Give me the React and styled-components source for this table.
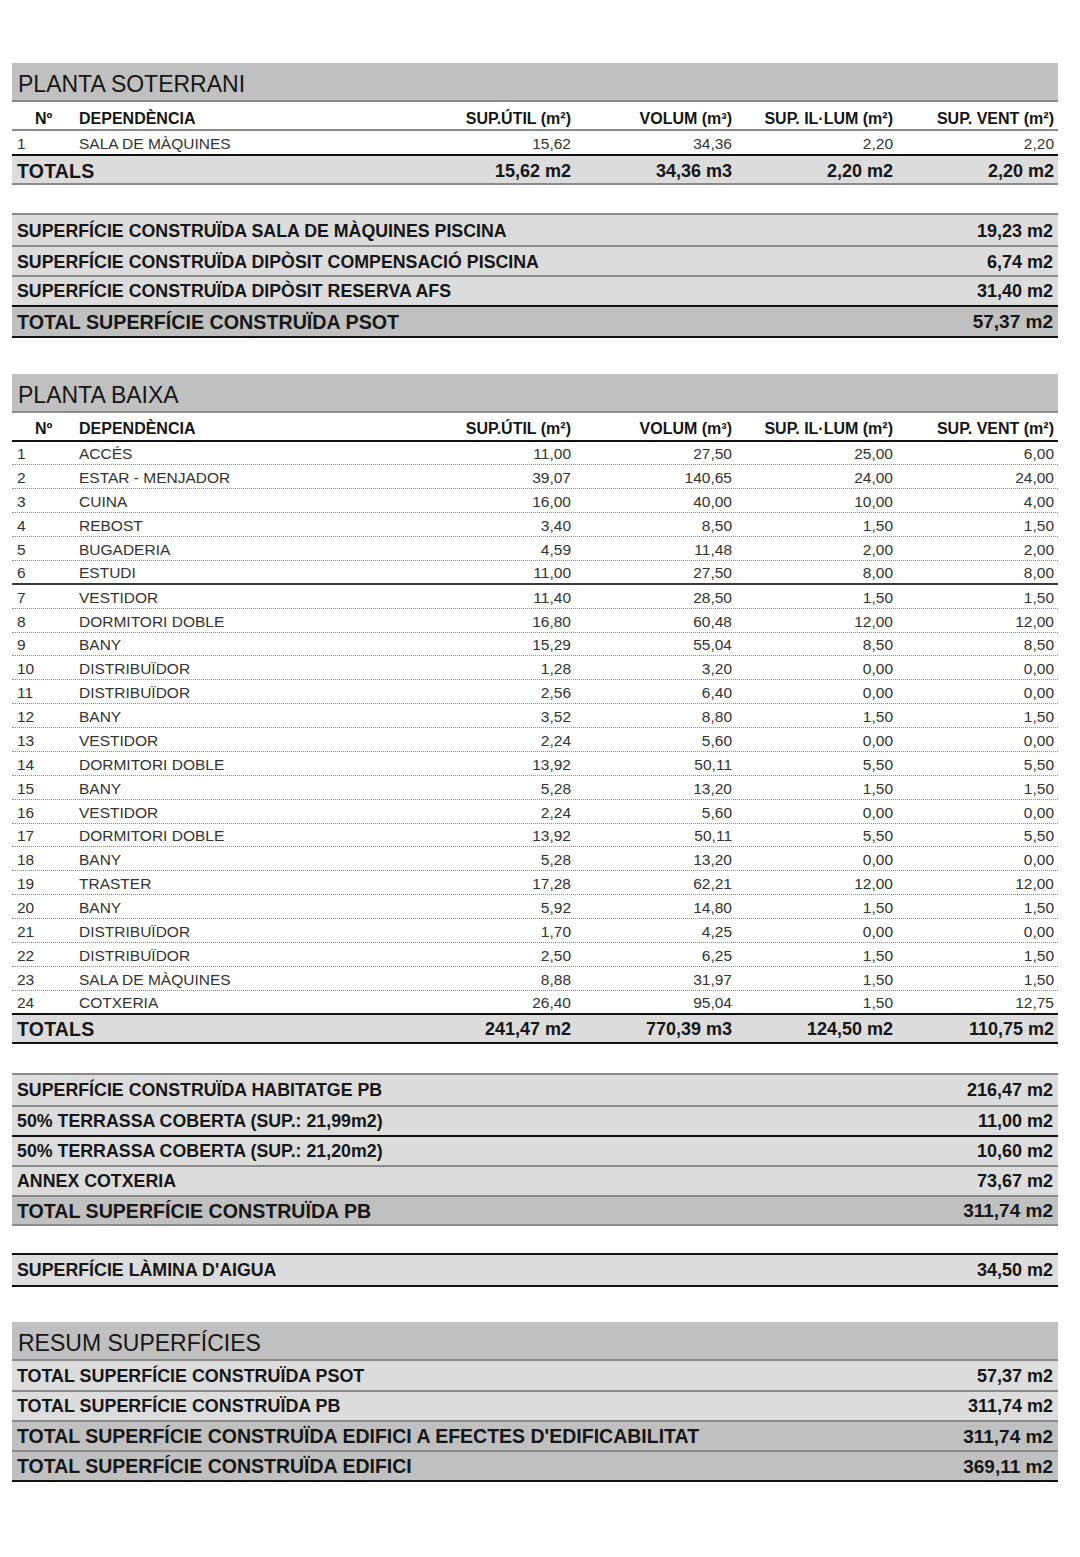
import React from 'react';
import styled, { createGlobalStyle } from 'styled-components';

const GlobalStyle = createGlobalStyle`
  html, body { margin: 0; padding: 0; background: #fff; }
  body { font-family: "Liberation Sans", Arial, sans-serif; color: #1a1a1a; }
`;

const Page = styled.div`
  width: 1046px;
  padding: 63px 0 60px 12px;
  display: flex;
  flex-direction: column;
`;

const Block = styled.section`
  margin-top: ${(p) => p.$gap || 0}px;
  display: flex;
  flex-direction: column;
`;

const TitleBand = styled.div`
  height: 39px;
  box-sizing: border-box;
  background: #c0c0c0;
  border-bottom: 2px solid #8a8a8a;
  padding: 6px 0 0 6px;
  display: flex;
  align-items: center;
  font-size: 23px;
  color: #161616;
`;

const lines = {
  dot: '1px dotted #8a8a8a',
  solid: '2px solid #3a3a3a',
  gray: '2px solid #8a8a8a',
  dark: '2px solid #111',
};

const Row = styled.div`
  display: grid;
  grid-template-columns: 67px 1fr 161px 161px 161px 161px;
  align-items: center;
  box-sizing: border-box;
  height: ${(p) => p.$h}px;
  background: ${(p) => p.$bg || '#fff'};
  border-bottom: ${(p) => lines[p.$line] || 'none'};
`;

const HeadCell = styled.div`
  font-weight: bold;
  font-size: 16px;
  color: #151515;
  padding-top: 6px;
  text-align: ${(p) => (p.$right ? 'right' : 'left')};
  padding-right: ${(p) => (p.$right ? 4 : 0)}px;
  padding-left: ${(p) => p.$pl || 0}px;
  white-space: nowrap;
`;

const Cell = styled.div`
  font-size: 15.5px;
  color: #333;
  padding-top: 3px;
  text-align: ${(p) => (p.$right ? 'right' : 'left')};
  padding-right: ${(p) => (p.$right ? 4 : 0)}px;
  padding-left: ${(p) => p.$pl || 0}px;
  white-space: nowrap;
`;

const TotalLabel = styled.div`
  grid-column: 1 / 3;
  font-weight: bold;
  font-size: 19.5px;
  padding: 3px 0 0 5px;
  letter-spacing: 0.2px;
  color: #161616;
`;

const TotalValue = styled.div`
  font-weight: bold;
  font-size: 18px;
  text-align: right;
  padding: 3px 4px 0 0;
  color: #161616;
  white-space: nowrap;
`;

const SumBox = styled.div`
  display: flex;
  flex-direction: column;
  border-top: ${(p) => lines[p.$top] || 'none'};
  border-bottom: ${(p) => lines[p.$bottom] || 'none'};
`;

const SumRow = styled.div`
  display: flex;
  justify-content: space-between;
  align-items: center;
  box-sizing: border-box;
  height: ${(p) => p.$h || 30}px;
  padding: 2px 5px 0 5px;
  background: ${(p) => (p.$dark ? '#c0c0c0' : '#dcdcdc')};
  border-top: ${(p) => lines[p.$line] || 'none'};
  font-weight: bold;
  color: #161616;
  white-space: nowrap;
`;

const SumLabel = styled.span`
  font-size: ${(p) => p.$size}px;
`;

const SumValue = styled.span`
  font-size: ${(p) => p.$size}px;
`;

const Header = ({ line }) => (
  <Row $h={29} $line={line}>
    <HeadCell $pl={23}>Nº</HeadCell>
    <HeadCell>DEPENDÈNCIA</HeadCell>
    <HeadCell $right>SUP.ÚTIL (m²)</HeadCell>
    <HeadCell $right>VOLUM (m³)</HeadCell>
    <HeadCell $right>SUP. IL·LUM (m²)</HeadCell>
    <HeadCell $right>SUP. VENT (m²)</HeadCell>
  </Row>
);

const DataRow = ({ r, h, line }) => (
  <Row $h={h} $line={line}>
    <Cell $pl={5}>{r[0]}</Cell>
    <Cell>{r[1]}</Cell>
    <Cell $right>{r[2]}</Cell>
    <Cell $right>{r[3]}</Cell>
    <Cell $right>{r[4]}</Cell>
    <Cell $right>{r[5]}</Cell>
  </Row>
);

const Totals = ({ values, line }) => (
  <Row $h={29} $bg="#dcdcdc" $line={line}>
    <TotalLabel>TOTALS</TotalLabel>
    {values.map((v, i) => (
      <TotalValue key={i}>{v}</TotalValue>
    ))}
  </Row>
);

const baixa = [
  ['1', 'ACCÉS', '11,00', '27,50', '25,00', '6,00'],
  ['2', 'ESTAR - MENJADOR', '39,07', '140,65', '24,00', '24,00'],
  ['3', 'CUINA', '16,00', '40,00', '10,00', '4,00'],
  ['4', 'REBOST', '3,40', '8,50', '1,50', '1,50'],
  ['5', 'BUGADERIA', '4,59', '11,48', '2,00', '2,00'],
  ['6', 'ESTUDI', '11,00', '27,50', '8,00', '8,00'],
  ['7', 'VESTIDOR', '11,40', '28,50', '1,50', '1,50'],
  ['8', 'DORMITORI DOBLE', '16,80', '60,48', '12,00', '12,00'],
  ['9', 'BANY', '15,29', '55,04', '8,50', '8,50'],
  ['10', 'DISTRIBUÏDOR', '1,28', '3,20', '0,00', '0,00'],
  ['11', 'DISTRIBUÏDOR', '2,56', '6,40', '0,00', '0,00'],
  ['12', 'BANY', '3,52', '8,80', '1,50', '1,50'],
  ['13', 'VESTIDOR', '2,24', '5,60', '0,00', '0,00'],
  ['14', 'DORMITORI DOBLE', '13,92', '50,11', '5,50', '5,50'],
  ['15', 'BANY', '5,28', '13,20', '1,50', '1,50'],
  ['16', 'VESTIDOR', '2,24', '5,60', '0,00', '0,00'],
  ['17', 'DORMITORI DOBLE', '13,92', '50,11', '5,50', '5,50'],
  ['18', 'BANY', '5,28', '13,20', '0,00', '0,00'],
  ['19', 'TRASTER', '17,28', '62,21', '12,00', '12,00'],
  ['20', 'BANY', '5,92', '14,80', '1,50', '1,50'],
  ['21', 'DISTRIBUÏDOR', '1,70', '4,25', '0,00', '0,00'],
  ['22', 'DISTRIBUÏDOR', '2,50', '6,25', '1,50', '1,50'],
  ['23', 'SALA DE MÀQUINES', '8,88', '31,97', '1,50', '1,50'],
  ['24', 'COTXERIA', '26,40', '95,04', '1,50', '12,75'],
];

const solidAfter = ['6'];

const App = () => {
  return (
    <>
      <GlobalStyle />
      <Page>
        <Block>
          <TitleBand>PLANTA SOTERRANI</TitleBand>
          <Header line="gray" />
          <DataRow r={['1', 'SALA DE MÀQUINES', '15,62', '34,36', '2,20', '2,20']} h={25} line="dark" />
          <Totals values={['15,62 m2', '34,36 m3', '2,20 m2', '2,20 m2']} line="gray" />
        </Block>

        <Block $gap={28}>
          <SumBox $top="gray" $bottom="dark">
            <SumRow $h={30}>
              <SumLabel $size={17.8}>SUPERFÍCIE CONSTRUÏDA SALA DE MÀQUINES PISCINA</SumLabel>
              <SumValue $size={18}>19,23 m2</SumValue>
            </SumRow>
            <SumRow $h={30} $line="gray">
              <SumLabel $size={17.8}>SUPERFÍCIE CONSTRUÏDA DIPÒSIT COMPENSACIÓ PISCINA</SumLabel>
              <SumValue $size={18}>6,74 m2</SumValue>
            </SumRow>
            <SumRow $h={29.5} $line="gray">
              <SumLabel $size={17.8}>SUPERFÍCIE CONSTRUÏDA DIPÒSIT RESERVA AFS</SumLabel>
              <SumValue $size={18}>31,40 m2</SumValue>
            </SumRow>
            <SumRow $h={31} $line="dark" $dark>
              <SumLabel $size={19.7}>TOTAL SUPERFÍCIE CONSTRUÏDA PSOT</SumLabel>
              <SumValue $size={19}>57,37 m2</SumValue>
            </SumRow>
          </SumBox>
        </Block>

        <Block $gap={36}>
          <TitleBand>PLANTA BAIXA</TitleBand>
          <Header line="dark" />
          {baixa.map((r, i) => (
            <DataRow
              key={r[0]}
              r={r}
              h={23.875}
              line={i === baixa.length - 1 ? 'dark' : solidAfter.includes(r[0]) ? 'solid' : 'dot'}
            />
          ))}
          <Totals values={['241,47 m2', '770,39 m3', '124,50 m2', '110,75 m2']} line="dark" />
        </Block>

        <Block $gap={29}>
          <SumBox $top="gray" $bottom="gray">
            <SumRow $h={30}>
              <SumLabel $size={17.8}>SUPERFÍCIE CONSTRUÏDA HABITATGE PB</SumLabel>
              <SumValue $size={18}>216,47 m2</SumValue>
            </SumRow>
            <SumRow $h={30} $line="gray">
              <SumLabel $size={17.8}>50% TERRASSA COBERTA (SUP.: 21,99m2)</SumLabel>
              <SumValue $size={18}>11,00 m2</SumValue>
            </SumRow>
            <SumRow $h={30} $line="dark">
              <SumLabel $size={17.8}>50% TERRASSA COBERTA (SUP.: 21,20m2)</SumLabel>
              <SumValue $size={18}>10,60 m2</SumValue>
            </SumRow>
            <SumRow $h={30} $line="gray">
              <SumLabel $size={17.8}>ANNEX COTXERIA</SumLabel>
              <SumValue $size={18}>73,67 m2</SumValue>
            </SumRow>
            <SumRow $h={29} $line="gray" $dark>
              <SumLabel $size={19.6}>TOTAL SUPERFÍCIE CONSTRUÏDA PB</SumLabel>
              <SumValue $size={19}>311,74 m2</SumValue>
            </SumRow>
          </SumBox>
        </Block>

        <Block $gap={27}>
          <SumBox $top="dark" $bottom="dark">
            <SumRow $h={30}>
              <SumLabel $size={17.8}>SUPERFÍCIE LÀMINA D'AIGUA</SumLabel>
              <SumValue $size={18}>34,50 m2</SumValue>
            </SumRow>
          </SumBox>
        </Block>

        <Block $gap={35}>
          <TitleBand>RESUM SUPERFÍCIES</TitleBand>
          <SumBox $bottom="dark">
            <SumRow $h={29}>
              <SumLabel $size={17.9}>TOTAL SUPERFÍCIE CONSTRUÏDA PSOT</SumLabel>
              <SumValue $size={18}>57,37 m2</SumValue>
            </SumRow>
            <SumRow $h={30} $line="gray">
              <SumLabel $size={17.9}>TOTAL SUPERFÍCIE CONSTRUÏDA PB</SumLabel>
              <SumValue $size={18}>311,74 m2</SumValue>
            </SumRow>
            <SumRow $h={30} $line="gray" $dark>
              <SumLabel $size={19.5}>TOTAL SUPERFÍCIE CONSTRUÏDA EDIFICI A EFECTES D'EDIFICABILITAT</SumLabel>
              <SumValue $size={19}>311,74 m2</SumValue>
            </SumRow>
            <SumRow $h={30} $line="gray" $dark>
              <SumLabel $size={19.5}>TOTAL SUPERFÍCIE CONSTRUÏDA EDIFICI</SumLabel>
              <SumValue $size={19}>369,11 m2</SumValue>
            </SumRow>
          </SumBox>
        </Block>
      </Page>
    </>
  );
};

export default App;
